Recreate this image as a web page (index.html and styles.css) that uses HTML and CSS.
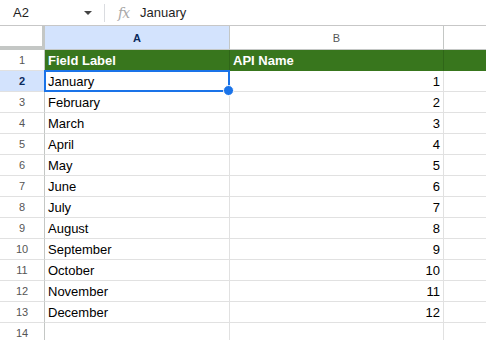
FILE: index.html
```html
<!DOCTYPE html>
<html lang="en">
<head>
  <meta charset="UTF-8" />
  <title>Months sheet</title>
  <link rel="stylesheet" href="styles.css">
</head>
<body>
  <!-- Formula bar -->
  <div class="formula-bar">
    <div class="name-box">
      <span class="cell-ref">A2</span>
      <span class="caret"></span>
    </div>
    <div class="divider"></div>
    <span class="fx">fx</span>
    <span class="formula">January</span>
  </div>

  <div class="grid">
    <div class="corner"></div>
    <div class="col-head active">A</div>
    <div class="col-head">B</div>
    <div class="col-head last"></div>

    <div class="row-head">1</div>
    <div class="cell head">Field Label</div>
    <div class="cell head">API Name</div>
    <div class="cell head last"></div>

    <div class="row-head active">2</div>
    <div class="cell selected">January</div>
    <div class="cell num">1</div>
    <div class="cell last"></div>

    <div class="row-head">3</div>
    <div class="cell">February</div>
    <div class="cell num">2</div>
    <div class="cell last"></div>

    <div class="row-head">4</div>
    <div class="cell">March</div>
    <div class="cell num">3</div>
    <div class="cell last"></div>

    <div class="row-head">5</div>
    <div class="cell">April</div>
    <div class="cell num">4</div>
    <div class="cell last"></div>

    <div class="row-head">6</div>
    <div class="cell">May</div>
    <div class="cell num">5</div>
    <div class="cell last"></div>

    <div class="row-head">7</div>
    <div class="cell">June</div>
    <div class="cell num">6</div>
    <div class="cell last"></div>

    <div class="row-head">8</div>
    <div class="cell">July</div>
    <div class="cell num">7</div>
    <div class="cell last"></div>

    <div class="row-head">9</div>
    <div class="cell">August</div>
    <div class="cell num">8</div>
    <div class="cell last"></div>

    <div class="row-head">10</div>
    <div class="cell">September</div>
    <div class="cell num">9</div>
    <div class="cell last"></div>

    <div class="row-head">11</div>
    <div class="cell">October</div>
    <div class="cell num">10</div>
    <div class="cell last"></div>

    <div class="row-head">12</div>
    <div class="cell">November</div>
    <div class="cell num">11</div>
    <div class="cell last"></div>

    <div class="row-head">13</div>
    <div class="cell">December</div>
    <div class="cell num">12</div>
    <div class="cell last"></div>

    <div class="row-head">14</div>
    <div class="cell"></div>
    <div class="cell"></div>
    <div class="cell last"></div>
  </div>
</body>
</html>
```

FILE: styles.css
```css
html, body {
  margin: 0;
  padding: 0;
  background: #fff;
  font-family: "Liberation Sans", Arial, sans-serif;
  overflow: hidden;
}

* {
  box-sizing: border-box;
}

/* formula bar */
.formula-bar {
  height: 26px;
  display: flex;
  align-items: center;
  border-bottom: 1px solid #c7c7c7;
  color: #1f1f1f;
  font-size: 13px;
}

.name-box {
  width: 104px;
  display: flex;
  align-items: center;
  justify-content: space-between;
  padding: 0 12px 0 13px;
}

.caret {
  width: 0;
  height: 0;
  border-left: 4px solid transparent;
  border-right: 4px solid transparent;
  border-top: 4px solid #444;
}

.divider {
  width: 1px;
  height: 18px;
  background: #dadce0;
}

.fx {
  font-family: "DejaVu Serif", "Liberation Serif", serif;
  font-style: italic;
  font-size: 14px;
  color: #a8a8a8;
  margin: 0 11px 0 13px;
  letter-spacing: -1px;
}

/* sheet grid */
.grid {
  display: grid;
  grid-template-columns: 45px 185px 214px 1fr;
  grid-auto-rows: 21px;
  grid-template-rows: 24px;
  font-size: 13px;
}

.corner {
  border-right: 4px solid #c4c7c5;
  border-bottom: 4px solid #c4c7c5;
  margin-right: -1px;
}

.col-head {
  display: flex;
  align-items: center;
  justify-content: center;
  font-size: 11px;
  color: #555;
  border-right: 1px solid #c4c7c5;
  border-bottom: 1px solid #c4c7c5;
}

.col-head.active {
  background: #d3e3fd;
  color: #0b2a5c;
  font-weight: bold;
}

.col-head.last,
.cell.last {
  border-right: none;
}

.row-head {
  display: flex;
  align-items: center;
  justify-content: center;
  font-size: 11px;
  color: #555;
  border-right: 1px solid #c4c7c5;
  border-bottom: 1px solid #e1e1e1;
}

.row-head.active {
  background: #d3e3fd;
  color: #0b2a5c;
  font-weight: bold;
}

.cell {
  display: flex;
  align-items: center;
  padding: 1px 3px 0;
  color: #000;
  border-right: 1px solid #e1e1e1;
  border-bottom: 1px solid #e1e1e1;
  white-space: nowrap;
}

.cell.num {
  justify-content: flex-end;
}

.cell.head {
  background: #38761d;
  color: #fff;
  font-weight: bold;
  border-right-color: #2f6618;
  border-bottom-color: #38761d;
}

/* active cell outline + fill handle */
.cell.selected {
  position: relative;
}

.cell.selected::before {
  content: "";
  position: absolute;
  left: -1px;
  top: -1px;
  right: -1px;
  bottom: -1px;
  border: 2px solid #1a73e8;
}

.cell.selected::after {
  content: "";
  position: absolute;
  right: -5px;
  bottom: -5px;
  width: 9px;
  height: 9px;
  border-radius: 50%;
  background: #1a73e8;
  border: 1px solid #fff;
}
```
